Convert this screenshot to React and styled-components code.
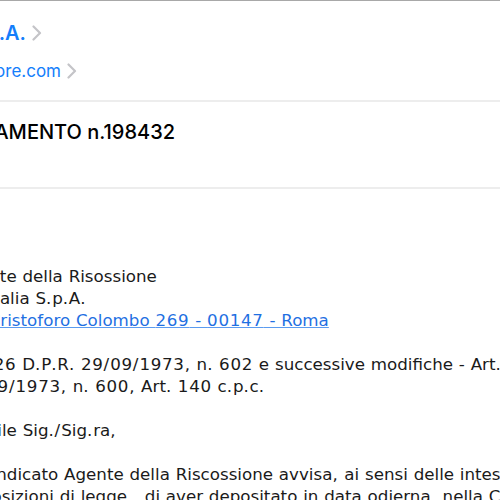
import React from 'react';
import styled, { createGlobalStyle } from 'styled-components';

const Global = createGlobalStyle`
  html, body { margin: 0; padding: 0; background: #fff; overflow: hidden; }
  #root { width: 500px; height: 500px; }
`;

const Screen = styled.div`
  width: 500px;
  height: 500px;
  overflow: hidden;
  background: #fff;
  border-top: 1px solid #a8a8a8;
  box-sizing: border-box;
  display: flex;
  flex-direction: column;
`;

const HeaderBlock = styled.div`
  height: 99px;
  flex: none;
  box-sizing: border-box;
  padding-top: 19px;
  display: flex;
  flex-direction: column;
  font-family: Inter, "Liberation Sans", sans-serif;
`;

const Field = styled.div`
  display: flex;
  align-items: center;
  height: ${p => p.$h}px;
  margin-top: ${p => p.$mt || 0}px;
`;

/* the field text is anchored at its right end; its start runs off the left edge */
const Clip = styled.div`
  width: ${p => p.$w}px;
  flex: none;
  display: flex;
  justify-content: flex-end;
  white-space: nowrap;
  font-size: ${p => p.$size}px;
  font-weight: ${p => p.$weight};
  color: ${p => p.$color};
`;

const Chevron = styled.svg`
  flex: none;
  margin-left: ${p => p.$ml}px;
  width: 10px;
  height: 16px;
`;

const Divider = styled.div`
  height: 2px;
  flex: none;
  background: #ededed;
`;

const SubjectBlock = styled.div`
  height: 85px;
  flex: none;
  box-sizing: border-box;
  padding-top: 17px;
  font-family: Inter, "Liberation Sans", sans-serif;
`;

const Body = styled.div`
  padding-top: 76px;
  margin-left: -43px;
  font-family: Verdana, "DejaVu Sans", sans-serif;
  font-size: 16.7px;
  word-spacing: 0.5px;
  line-height: 22px;
  color: #1a1a1a;
  white-space: nowrap;
`;

const Line = styled.div`
  height: 22px;
`;

/* digits and punctuation are a little wider in the original face */
const Tok = styled.span`
  letter-spacing: ${p => p.$ls}px;
`;

const Link = styled.a`
  color: #1f70e2;
  text-decoration: underline;
  text-decoration-color: #5b9bf0;
`;

const spacingFor = (run) => {
  if (/^\d+$/.test(run)) return 0.7;
  if (/^\/+$/.test(run)) return 1;
  return 0.8;
};

const Fit = ({ children }) =>
  children.split(/(\d+|[.,]+|\/+)/).map((run, i) =>
    /^(\d+|[.,]+|\/+)$/.test(run) ? (
      <Tok key={i} $ls={spacingFor(run)}>{run}</Tok>
    ) : (
      <React.Fragment key={i}>{run}</React.Fragment>
    )
  );

const ChevronIcon = ({ ml }) => (
  <Chevron $ml={ml} viewBox="0 0 10 16">
    <path d="M1.5 1.5 L8 8 L1.5 14.5" fill="none" stroke="#c4c4c8" strokeWidth="2.2" strokeLinecap="round" strokeLinejoin="round" />
  </Chevron>
);

const lines = [
  'Agente della Risossione',
  'Equitalia S.p.A.',
  null,
  '',
  'Art. 26 D.P.R. 29/09/1973, n. 602 e successive modifiche - Art. 60 D.P.R.',
  '29/09/1973, n. 600, Art. 140 c.p.c.',
  '',
  'Gentile Sig./Sig.ra,',
  '',
  'Il suindicato Agente della Riscossione avvisa, ai sensi delle intese',
  'disposizioni di legge , di aver depositato in data odierna, nella Casa',
];

export default function App() {
  return (
    <>
      <Global />
      <Screen>
        <HeaderBlock>
          <Field $h={26}>
            <Clip $w={26} $size={20} $weight={600} $color="#147efb">Equitalia S.p.A.</Clip>
            <ChevronIcon ml={6} />
          </Field>
          <Field $h={24} $mt={13}>
            <Clip $w={61} $size={17} $weight={400} $color="#147efb">avvisi@equitalia-riscossore.com</Clip>
            <ChevronIcon ml={6} />
          </Field>
        </HeaderBlock>
        <Divider />
        <SubjectBlock>
          <Field $h={26}>
            <Clip $w={175} $size={20} $weight={500} $color="#000">AVVISO DI PAGAMENTO n.198432</Clip>
          </Field>
        </SubjectBlock>
        <Divider />
        <Body>
          {lines.map((t, i) =>
            t === null ? (
              <Line key={i}>
                <Link href="#"><Fit>Via Cristoforo Colombo 269 - 00147 - Roma</Fit></Link>
              </Line>
            ) : (
              <Line key={i}><Fit>{t}</Fit></Line>
            )
          )}
        </Body>
      </Screen>
    </>
  );
}
